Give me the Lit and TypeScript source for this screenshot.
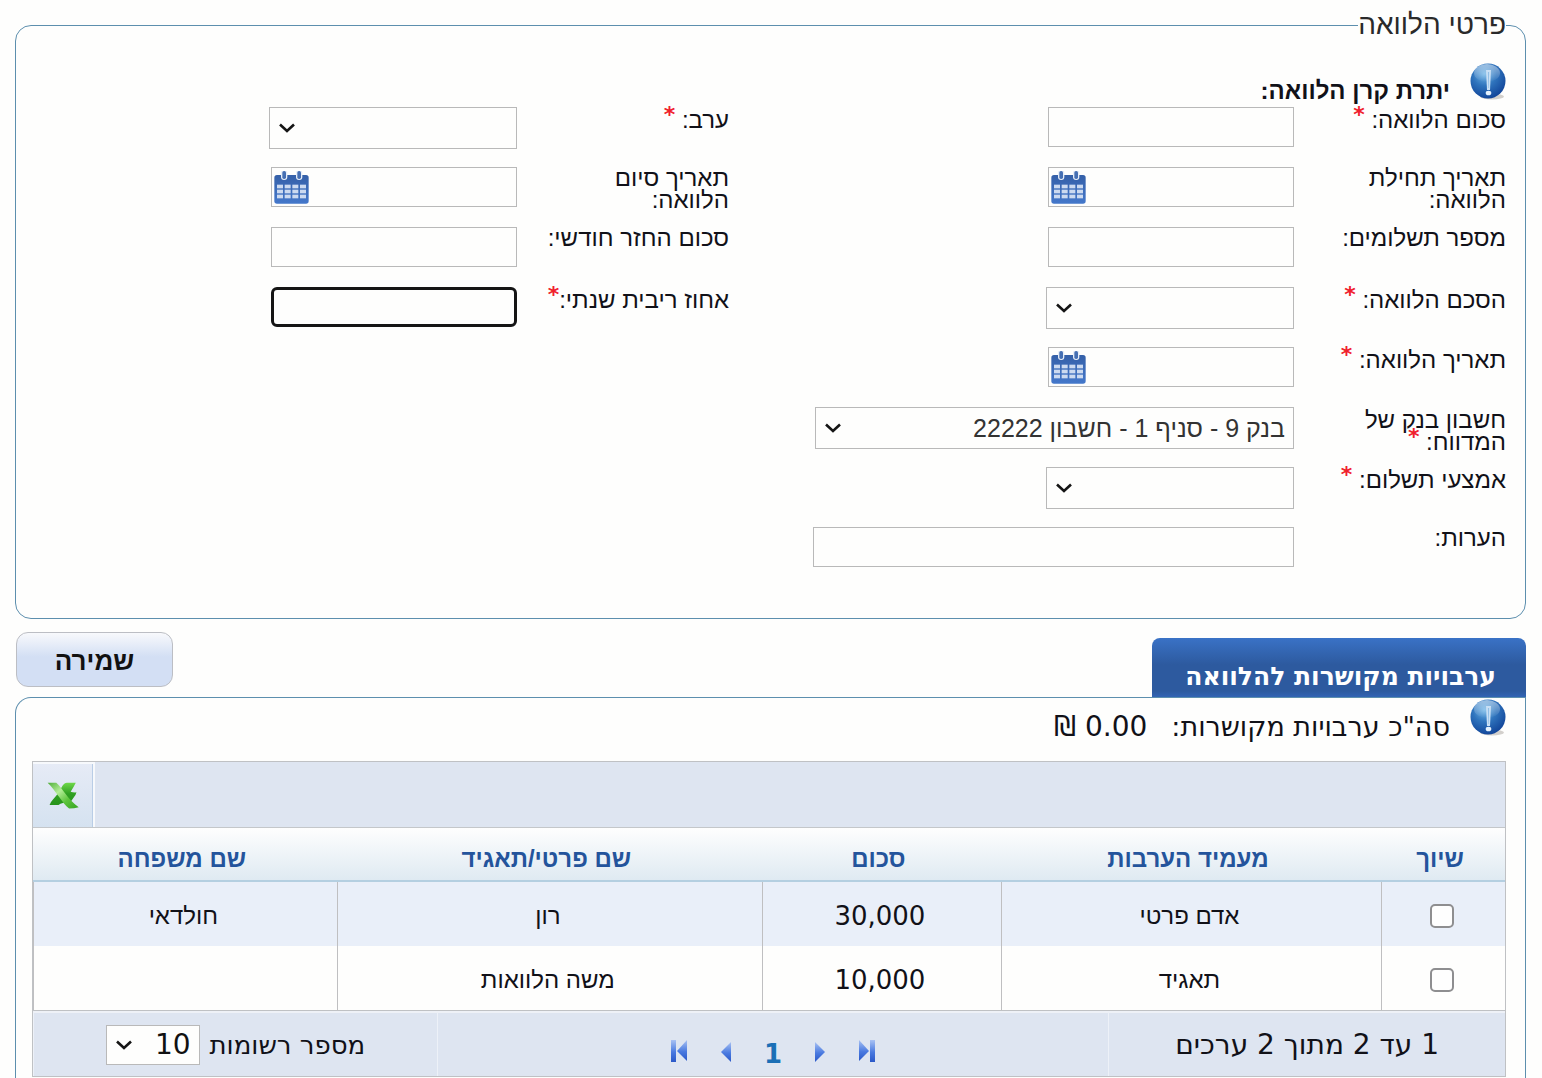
import { LitElement, html, css, svg, nothing } from 'lit';
import { customElement } from 'lit/decorators.js';
import { classMap } from 'lit/directives/class-map.js';

interface Field {
  id: string;
  lines: string[];
  kind: 'text' | 'date' | 'select';
  required?: 'spaced' | 'tight';
  width?: 'wide' | 'full';
  active?: boolean;
  value?: string;
}

interface Guarantee {
  provider: string;
  amount: string;
  name: string;
  family: string;
}

const LOAN_FIELDS: Field[] = [
  { id: 'amount', lines: ['סכום הלוואה:'], kind: 'text', required: 'spaced' },
  { id: 'start', lines: ['תאריך תחילת', 'הלוואה:'], kind: 'date' },
  { id: 'payments', lines: ['מספר תשלומים:'], kind: 'text' },
  { id: 'agreement', lines: ['הסכם הלוואה:'], kind: 'select', required: 'spaced' },
  { id: 'date', lines: ['תאריך הלוואה:'], kind: 'date', required: 'spaced' },
  {
    id: 'account',
    lines: ['חשבון בנק של', 'המדווח:'],
    kind: 'select',
    required: 'spaced',
    width: 'wide',
    value: 'בנק 9 - סניף 1 - חשבון 22222',
  },
  { id: 'method', lines: ['אמצעי תשלום:'], kind: 'select', required: 'spaced' },
  { id: 'notes', lines: ['הערות:'], kind: 'text', width: 'full' },
];

const TERMS_FIELDS: Field[] = [
  { id: 'guarantor', lines: ['ערב:'], kind: 'select', required: 'spaced' },
  { id: 'end', lines: ['תאריך סיום', 'הלוואה:'], kind: 'date' },
  { id: 'monthly', lines: ['סכום החזר חודשי:'], kind: 'text' },
  { id: 'interest', lines: ['אחוז ריבית שנתי:'], kind: 'text', required: 'tight', active: true },
];

const ROWS: Guarantee[] = [
  { provider: 'אדם פרטי', amount: '30,000', name: 'רון', family: 'חולדאי' },
  { provider: 'תאגיד', amount: '10,000', name: 'משה הלוואות', family: '' },
];

const infoIcon = html`<svg class="info-icon" viewBox="0 0 36 38" aria-hidden="true">
  <defs>
    <radialGradient id="ball" cx="0.4" cy="0.3" r="0.75">
      <stop offset="0" stop-color="#6fb4e6" />
      <stop offset="0.45" stop-color="#2f74bd" />
      <stop offset="1" stop-color="#0f4196" />
    </radialGradient>
    <linearGradient id="gloss" x1="0" y1="0" x2="0" y2="1">
      <stop offset="0" stop-color="#fff" stop-opacity="0.5" />
      <stop offset="1" stop-color="#fff" stop-opacity="0" />
    </linearGradient>
  </defs>
  <ellipse cx="22" cy="33.5" rx="12" ry="3" fill="#d3d0cc" />
  <circle cx="18" cy="18" r="17.5" fill="url(#ball)" />
  <ellipse cx="17" cy="10" rx="13" ry="9" fill="url(#gloss)" />
  <path d="M16 7h5l-1 20h-3z" fill="#c9e0f5" />
  <path d="M17.9 9h1.2l-.3 16h-.6z" fill="#93bfe6" />
  <ellipse cx="18.5" cy="30" rx="2.8" ry="2.3" fill="#e6f2fd" />
</svg>`;

const calendarIcon = html`<svg class="calendar-icon" viewBox="0 0 105 99" aria-hidden="true">
  <defs>
    <linearGradient id="cal" x1="0" y1="0" x2="0" y2="1">
      <stop offset="0" stop-color="#3560a8" />
      <stop offset="1" stop-color="#4478cb" />
    </linearGradient>
  </defs>
  <rect x="1" y="12" width="103" height="86" rx="8" fill="url(#cal)" />
  ${[30, 75].map(
    (x) => svg`<rect x=${x - 9} y="-3" width="19" height="30" rx="9" fill="#e6edf7" />
      <rect x=${x - 5} y="0" width="11" height="24" rx="5" fill="#456fb3" />`,
  )}
  ${[41, 56, 71].map((y) =>
    [9, 32, 55, 78].map((x) => svg`<rect x=${x} y=${y} width="18" height="11" fill="#ccdaf0" />`),
  )}
</svg>`;

const chevron = html`<svg class="chevron" viewBox="0 0 16 10" aria-hidden="true">
  <path d="M1 1.5 8 8l7-6.5" fill="none" stroke="#151515" stroke-width="2.6" />
</svg>`;

const excelIcon = html`<svg class="excel-icon" viewBox="0 0 100 86" aria-hidden="true">
  <defs>
    <linearGradient id="xb" x1="0" y1="0" x2="0" y2="1">
      <stop offset="0" stop-color="#6fd84a" />
      <stop offset="0.5" stop-color="#2f9f22" />
      <stop offset="1" stop-color="#27931b" />
    </linearGradient>
    <linearGradient id="xf" x1="0" y1="0" x2="1" y2="1">
      <stop offset="0" stop-color="#4fae3a" />
      <stop offset="0.35" stop-color="#b4ee98" />
      <stop offset="0.65" stop-color="#5cc43c" />
      <stop offset="1" stop-color="#35a322" />
    </linearGradient>
  </defs>
  <path d="M50 10Q56 3 62 3h28q-7 14-16 28 9 3 18 2-2 9-7 14L72 66 52 66Q40 68 36 73H8q3-10 10-17l14-16Z" fill="url(#xb)" />
  <path d="M2 3h27c10 8 18 20 28 34 12 17 24 30 42 43q-14 4-30 4C58 76 48 62 38 48 26 31 14 15 2 3Z" fill="url(#xf)" />
</svg>`;

const arrow = (toLeft: boolean, bar: boolean) => html`<svg
  class=${classMap({ arrow: true, left: toLeft })}
  viewBox="0 0 24 24"
  aria-hidden="true"
>
  <defs>
    <linearGradient id="ar" x1="0" y1="0" x2="0" y2="1">
      <stop offset="0" stop-color="#a9c2f3" />
      <stop offset="0.55" stop-color="#4a7ae0" />
      <stop offset="1" stop-color="#2a58c8" />
    </linearGradient>
  </defs>
  ${bar
    ? svg`<path d="M4 1 14 12 4 22Z" fill="url(#ar)" /><rect x="15" y="1" width="5" height="22" fill="url(#ar)" />`
    : svg`<path d="M7 3 17 13 7 23Z" fill="url(#ar)" />`}
</svg>`;

@customElement('app-root')
export class AppRoot extends LitElement {
  static styles = css`
    :host {
      display: flex;
      flex-direction: column;
      box-sizing: border-box;
      min-height: 100vh;
      padding: 10px 16px 0 15px;
      direction: rtl;
      background: #fefefd;
      color: #111118;
      font-family: 'Liberation Sans', sans-serif;
      font-size: 24px;
      line-height: 22px;
    }
    * {
      box-sizing: border-box;
    }
    button,
    input,
    select {
      margin: 0;
      font-family: inherit;
      color: inherit;
    }
    button {
      cursor: pointer;
    }
    .loan {
      margin: 0;
      min-width: 0;
      padding: 0 19px 31px;
      border: 1px solid #5d8fae;
      border-radius: 16px;
    }
    .loan-title {
      padding: 0;
      font-size: 28px;
      line-height: 30px;
      color: #2a2a2a;
    }
    .summary {
      display: flex;
      gap: 20px;
    }
    .balance {
      height: 67px;
      padding-top: 23px;
      font-weight: bold;
      line-height: 32px;
    }
    .balance-text {
      align-self: flex-end;
    }
    .info-icon {
      flex: none;
      width: 36px;
      height: 38px;
    }
    .columns {
      display: grid;
      grid-template-columns: 777fr 694fr;
    }
    .field {
      display: flex;
      height: 60px;
    }
    .label {
      flex: none;
      width: 212px;
      white-space: nowrap;
    }
    .label.required {
      padding-top: 2px;
    }
    .line {
      display: block;
    }
    .star {
      color: #f0202c;
      font-family: 'DejaVu Sans', sans-serif;
      font-size: 22px;
      font-weight: bold;
      line-height: 0;
      vertical-align: 6px;
    }
    .box {
      display: grid;
      width: 246px;
      height: 40px;
      align-items: center;
    }
    .box.select {
      width: 248px;
      height: 42px;
    }
    .box.select.wide {
      width: 479px;
    }
    .box.full {
      width: 481px;
    }
    .control {
      grid-area: 1 / 1;
      width: 100%;
      height: 100%;
      padding: 0 8px;
      border: 1px solid #b9b9b9;
      border-radius: 0;
      outline: none;
      background: #fefefd;
      font-size: 25px;
      appearance: none;
    }
    select.control {
      color: #333;
    }
    .control.active {
      border: 3px solid #151515;
      border-radius: 6px;
    }
    .chevron {
      grid-area: 1 / 1;
      justify-self: end;
      width: 16px;
      height: 10px;
      margin-left: 10px;
      pointer-events: none;
    }
    .calendar {
      grid-area: 1 / 1;
      justify-self: end;
      width: 35px;
      height: 33px;
      margin-left: 3px;
      padding: 0;
      border: 0;
      background: none;
    }
    .calendar-icon {
      display: block;
      width: 35px;
      height: 33px;
    }
    .bar {
      display: flex;
      justify-content: space-between;
      padding-top: 13px;
    }
    .tab {
      align-self: flex-end;
      height: 59px;
      padding: 18px 30px 0 33px;
      border: 0;
      border-radius: 8px 8px 0 0;
      background: linear-gradient(#3a72c6, #2d5a9f 45%, #2d5a9f 90%, #3264b4);
      color: #fff;
      font-family: 'DejaVu Sans', sans-serif;
      font-size: 25px;
      font-weight: bold;
    }
    .save {
      width: 157px;
      height: 55px;
      margin: 0 0 10px 1px;
      padding: 4px 0 0;
      border: 1px solid #bcbec4;
      border-radius: 12px;
      background: linear-gradient(#f8f9fc, #d3dff4 45%, #d3dff4);
      color: #111;
      font-size: 26px;
      font-weight: bold;
    }
    .panel {
      flex: 1;
      padding: 0 19px 0 16px;
      border: 1px solid #5d8fae;
      border-bottom: 0;
      border-radius: 16px 0 0 0;
    }
    .total {
      height: 63px;
      padding-top: 1px;
      font-family: 'DejaVu Sans', sans-serif;
      font-size: 27px;
      line-height: 56px;
    }
    .sum {
      margin-right: 4px;
      font-size: 28px;
    }
    .grid {
      border: 1px solid #bfc1c4;
    }
    .toolbar {
      display: flex;
      justify-content: flex-end;
      height: 65px;
      background: #dee5f1;
    }
    .export {
      display: grid;
      place-items: center;
      width: 62px;
      padding: 0;
      border: 0 solid #f7f9fc;
      border-top-width: 2px;
      border-right-width: 2px;
      background: linear-gradient(#e6ebf6, #d5e2f0);
      box-shadow: -1px 0 #b9cde6 inset;
    }
    .excel-icon {
      width: 32px;
      height: 29px;
    }
    table {
      width: 100%;
      border-collapse: separate;
      border-spacing: 0;
      table-layout: fixed;
    }
    th {
      height: 55px;
      padding: 10px 6px 0 0;
      border-top: 1px solid #c4c7ca;
      border-bottom: 2px solid #b4cfe1;
      background: linear-gradient(#fefefe, #dfeaf2);
      color: #24549c;
      font-weight: bold;
    }
    td {
      height: 64px;
      padding: 3px 4px 0 0;
      border-left: 1px solid #bfbfc1;
      text-align: center;
    }
    .stripe td {
      background: #e9eff9;
    }
    .pick {
      width: calc(100% * 124 / 1474);
    }
    .provider {
      width: calc(100% * 381 / 1474);
    }
    .amount {
      width: calc(100% * 239 / 1474);
    }
    .name {
      width: calc(100% * 426 / 1474);
    }
    .number {
      font-family: 'DejaVu Sans', sans-serif;
      font-size: 26px;
    }
    .check {
      display: block;
      width: 24px;
      height: 24px;
      margin: 0 auto;
      border: 2px solid #8e8e90;
      border-radius: 5px;
      background: #fefefe;
      appearance: none;
    }
    .check:checked {
      background: #2d5a9f;
    }
    .footer {
      display: grid;
      grid-template-columns: 397fr 672fr 404fr;
      height: 66px;
      border-top: 1px solid #bfc1c4;
      background: #dee5f1;
      font-family: 'DejaVu Sans', sans-serif;
      font-size: 26px;
    }
    .part {
      display: flex;
      align-items: center;
      justify-content: center;
      border-top: 2px solid #eef1f7;
      border-left: 1px solid #edf1f8;
    }
    .range {
      font-size: 28px;
    }
    .pager {
      gap: 23px;
      padding-top: 12px;
    }
    .page {
      display: grid;
      place-items: center;
      width: 24px;
      height: 24px;
      padding: 0;
      border: 0;
      background: none;
      color: #1b6fb6;
      font-size: 26px;
      font-weight: bold;
    }
    .page.current {
      padding-bottom: 6px;
    }
    .arrow {
      width: 24px;
      height: 24px;
    }
    .arrow.left {
      transform: scaleX(-1);
    }
    .size {
      gap: 10px;
    }
    .box.select.small {
      width: 94px;
      height: 40px;
    }
    .small .control {
      color: #111;
      font-family: inherit;
      font-size: 28px;
    }
  `;

  private renderSelect(id: string, value = '') {
    return html`<select class="control" id=${id}>
        <option>${value}</option>
      </select>
      ${chevron}`;
  }

  private renderField(f: Field) {
    const boxClasses = {
      box: true,
      select: f.kind === 'select',
      wide: f.width === 'wide',
      full: f.width === 'full',
    };
    const last = f.lines.length - 1;
    return html`<div class="field">
      <label class=${classMap({ label: true, required: !!f.required })} for=${f.id}>
        ${f.lines.map(
          (line, i) =>
            html`<span class="line"
              >${line}${i === last && f.required
                ? html`${f.required === 'spaced' ? ' ' : ''}<span class="star">*</span>`
                : nothing}</span
            >`,
        )}
      </label>
      <div class=${classMap(boxClasses)}>
        ${f.kind === 'select'
          ? this.renderSelect(f.id, f.value)
          : html`<input class=${classMap({ control: true, active: !!f.active })} id=${f.id} type="text" />`}
        ${f.kind === 'date'
          ? html`<button class="calendar" type="button" aria-label="בחירת תאריך">${calendarIcon}</button>`
          : nothing}
      </div>
    </div>`;
  }

  render() {
    return html`
      <fieldset class="loan">
        <legend class="loan-title">פרטי הלוואה</legend>
        <div class="summary balance">
          ${infoIcon}
          <span class="balance-text">יתרת קרן הלוואה:</span>
        </div>
        <div class="columns">
          <div>${LOAN_FIELDS.map((f) => this.renderField(f))}</div>
          <div>${TERMS_FIELDS.map((f) => this.renderField(f))}</div>
        </div>
      </fieldset>

      <div class="bar">
        <button class="tab" type="button">ערבויות מקושרות להלוואה</button>
        <button class="save" type="button">שמירה</button>
      </div>

      <section class="panel">
        <div class="summary total">
          ${infoIcon}
          <span>סה"כ ערבויות מקושרות:</span>
          <span class="sum">0.00 ₪</span>
        </div>
        <div class="grid">
          <div class="toolbar">
            <button class="export" type="button" aria-label="Excel">${excelIcon}</button>
          </div>
          <table>
            <thead>
              <tr>
                <th class="pick">שיוך</th>
                <th class="provider">מעמיד הערבות</th>
                <th class="amount">סכום</th>
                <th class="name">שם פרטי/תאגיד</th>
                <th>שם משפחה</th>
              </tr>
            </thead>
            <tbody>
              ${ROWS.map(
                (r, i) => html`<tr class=${classMap({ stripe: i % 2 === 0 })}>
                  <td><input class="check" type="checkbox" aria-label=${r.provider} /></td>
                  <td>${r.provider}</td>
                  <td class="number">${r.amount}</td>
                  <td>${r.name}</td>
                  <td>${r.family}</td>
                </tr>`,
              )}
            </tbody>
          </table>
          <div class="footer">
            <div class="part range">1 עד 2 מתוך 2 ערכים</div>
            <nav class="part pager">
              <button class="page" type="button" aria-label="ראשון">${arrow(false, true)}</button>
              <button class="page" type="button" aria-label="הקודם">${arrow(false, false)}</button>
              <button class="page current" type="button">1</button>
              <button class="page" type="button" aria-label="הבא">${arrow(true, false)}</button>
              <button class="page" type="button" aria-label="אחרון">${arrow(true, true)}</button>
            </nav>
            <div class="part size">
              <label for="page-size">מספר רשומות</label>
              <div class="box select small">${this.renderSelect('page-size', '10')}</div>
            </div>
          </div>
        </div>
      </section>
    `;
  }
}
